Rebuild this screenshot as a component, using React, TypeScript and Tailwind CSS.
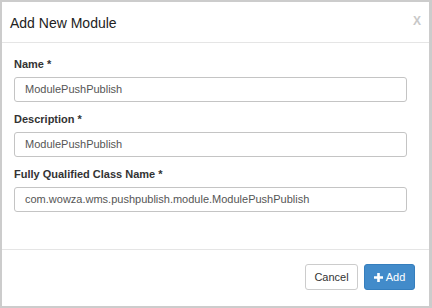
import React from "react";

const fields = [
  { label: "Name", value: "ModulePushPublish" },
  { label: "Description", value: "ModulePushPublish" },
  { label: "Fully Qualified Class Name", value: "com.wowza.wms.pushpublish.module.ModulePushPublish" },
];

export default function App() {
  return (
    <div className="w-[432px] h-[308px] bg-[#cccccc] pt-[2px] pl-[2px] pr-[3px] pb-[2px] font-['Liberation_Sans',Arial,sans-serif] text-[#333]">
      <div className="h-full bg-white flex flex-col">
        <div className="h-[41px] border-b border-[#e5e5e5] flex items-start justify-between pl-[8px] pr-[8px]">
          <h4 className="text-[14px] mt-[12px] leading-[18px] text-[#222]">Add New Module</h4>
          <span className="text-[#c8c8c8] text-[12px] font-bold mt-[10px]">X</span>
        </div>
        <div className="flex-1 pl-[12px] pt-[14px]">
          {fields.map((f, i) => (
            <div key={i} className={i > 0 ? "mt-[10px]" : ""}>
              <label className="block text-[11px] font-bold leading-[14px] mb-[6px]">
                {f.label} <span className="text-[#333]">*</span>
              </label>
              <div className="w-[393px] h-[25px] border border-[#c4c4c4] rounded-[3px] px-[10px] flex items-center text-[11px] text-[#555]">
                {f.value}
              </div>
            </div>
          ))}
        </div>
        <div className="h-[57px] border-t border-[#e5e5e5] flex items-start justify-end gap-[6px] pr-[14px] pt-[14px]">
          <button className="h-[26px] w-[53px] border border-[#cccccc] rounded-[3px] bg-white text-[11px] text-[#333]">
            Cancel
          </button>
          <button className="h-[26px] w-[51px] border border-[#357ebd] rounded-[3px] bg-[#428bca] text-[11px] text-white flex items-center justify-center gap-[3px]">
            <svg width="9" height="9" viewBox="0 0 9 9">
              <path d="M3.2 0h2.6v3.2H9v2.6H5.8V9H3.2V5.8H0V3.2h3.2z" fill="white" />
            </svg>
            Add
          </button>
        </div>
      </div>
    </div>
  );
}
